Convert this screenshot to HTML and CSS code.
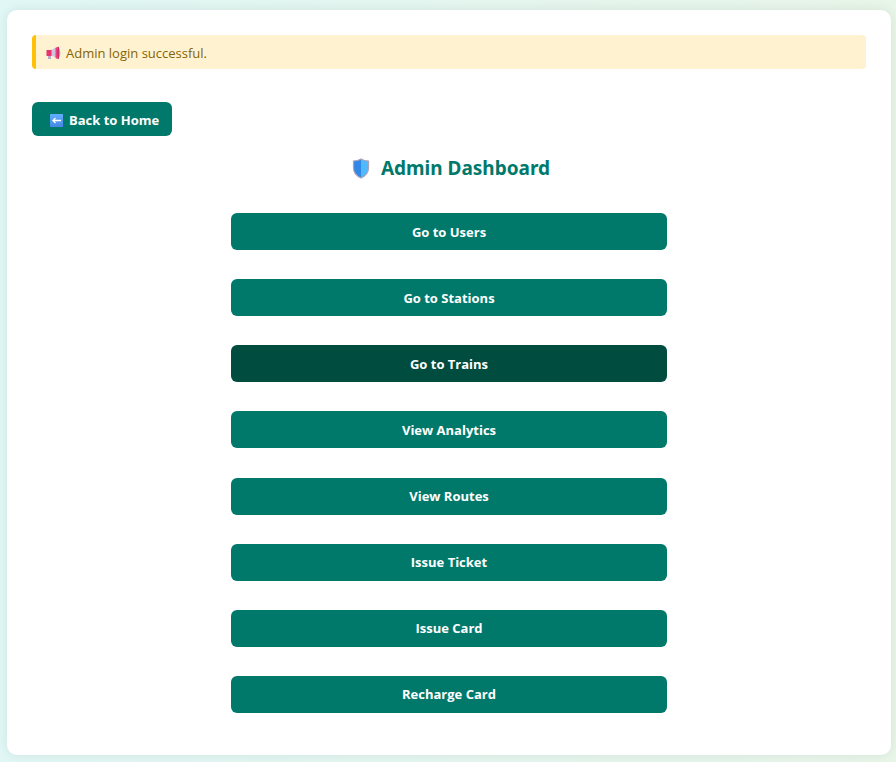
FILE: index.html
```html
<!DOCTYPE html>
<html lang="en">
<head>
<meta charset="utf-8">
<meta name="viewport" content="width=device-width, initial-scale=1">
<title>Admin Dashboard</title>
<link rel="stylesheet" href="styles.css">
</head>
<body>
<main class="card">
  <div class="alert" role="status">
    <svg class="alert-icon" viewBox="0 0 15 14" aria-hidden="true">
      <path d="M2 9h3v4H2z" fill="#b9abc9"/>
      <path d="M5 4l5-2.500v10L5 9.500z" fill="#cdc3db"/>
      <rect x="0.500" y="4" width="5" height="6" rx="0.600" fill="#e8336f"/>
      <path d="M9.500 2Q11 .8 13 .8V13Q10.500 13 9.500 12z" fill="#f03f7c"/>
      <path d="M12.500 .8q1.200 2 1.200 6t-1.200 6.200q-1.200-2-1.200-6.200T12.500 .8z" fill="#c82c68"/>
      <path d="M12.800 5.500q1.700 0 1.700 1.500t-1.700 1.500z" fill="#a99abc"/>
    </svg>
    <span>Admin login successful.</span>
  </div>

  <button type="button" class="btn btn-back">
    <svg class="back-icon" viewBox="0 0 13 13" aria-hidden="true">
      <defs>
        <linearGradient id="tile" x1="0" y1="0" x2="0" y2="1">
          <stop offset="0" stop-color="#62aefc"/>
          <stop offset="1" stop-color="#4388e4"/>
        </linearGradient>
      </defs>
      <rect width="13" height="13" rx="0.500" fill="url(#tile)"/>
      <path d="M11 6.500H3M5.500 4L3 6.500L5.500 9" fill="none" stroke="#fff" stroke-width="1.300"/>
    </svg>
    <span>Back to Home</span>
  </button>

  <h1 class="title">
    <svg class="title-icon" viewBox="-4 0 22 21" aria-hidden="true">
      <path d="M9 1Q12 3 16.500 3V10Q16.500 16.500 9 20Q1.500 16.500 1.500 10V3Q6 3 9 1z" fill="#50b8fc"/>
      <path d="M9 1V20Q1.500 16.500 1.500 10V3Q6 3 9 1z" fill="#3187e8"/>
      <path d="M9 1Q12 3 16.500 3V10Q16.500 16.500 9 20Q1.500 16.500 1.500 10V3Q6 3 9 1z" fill="none" stroke="#aaa2b8" stroke-width="1.200"/>
    </svg>
    <span>Admin Dashboard</span>
  </h1>

  <nav class="menu" aria-label="Admin actions">
    <button type="button" class="btn">Go to Users</button>
    <button type="button" class="btn">Go to Stations</button>
    <button type="button" class="btn active">Go to Trains</button>
    <button type="button" class="btn">View Analytics</button>
    <button type="button" class="btn">View Routes</button>
    <button type="button" class="btn">Issue Ticket</button>
    <button type="button" class="btn">Issue Card</button>
    <button type="button" class="btn">Recharge Card</button>
  </nav>
</main>
</body>
</html>
```
FILE: styles.css
```css
* {
  box-sizing: border-box;
}

body {
  margin: 0;
  padding: 10px 5px 7px 7px;
  min-height: 100vh;
  font-family: "Open Sans", "Noto Sans", sans-serif;
  font-size: 13px;
  background: linear-gradient(to right, #e0f7f5, #e8f5e9);
}

.card {
  padding: 25px 25px 42px;
  background: #fff;
  border-radius: 10px;
  box-shadow: 0 0 12px rgba(0, 0, 0, 0.08);
}

.alert {
  display: flex;
  align-items: center;
  gap: 5px;
  height: 34px;
  margin-bottom: 33px;
  padding: 2px 10px 0;
  color: #856404;
  background: #fff2d0;
  border-left: 4px solid #ffc107;
  border-radius: 4px;
}

.alert-icon {
  width: 15px;
  height: 14px;
}

.btn {
  height: 37px;
  padding: 0 15px;
  font-family: inherit;
  font-size: 13px;
  font-weight: 700;
  color: #fff;
  background: #00796b;
  border: 0;
  border-radius: 6px;
  cursor: pointer;
}

.btn:hover,
.btn.active {
  background: #004d40;
}

.btn-back {
  display: flex;
  align-items: center;
  gap: 6px;
  height: 34px;
  padding: 2px 13px 0 18px;
}

.back-icon {
  width: 13px;
  height: 13px;
}

.title {
  display: flex;
  align-items: center;
  justify-content: center;
  gap: 11px;
  margin: 17px 0 30px;
  font-family: "Noto Sans", "Open Sans", sans-serif;
  font-size: 19px;
  font-weight: 700;
  line-height: 30px;
  color: #00796b;
}

.title-icon {
  width: 22px;
  height: 21px;
}

.menu {
  display: grid;
  align-content: space-between;
  min-height: 500px;
  max-width: 436px;
  margin: 0 auto;
}
```
